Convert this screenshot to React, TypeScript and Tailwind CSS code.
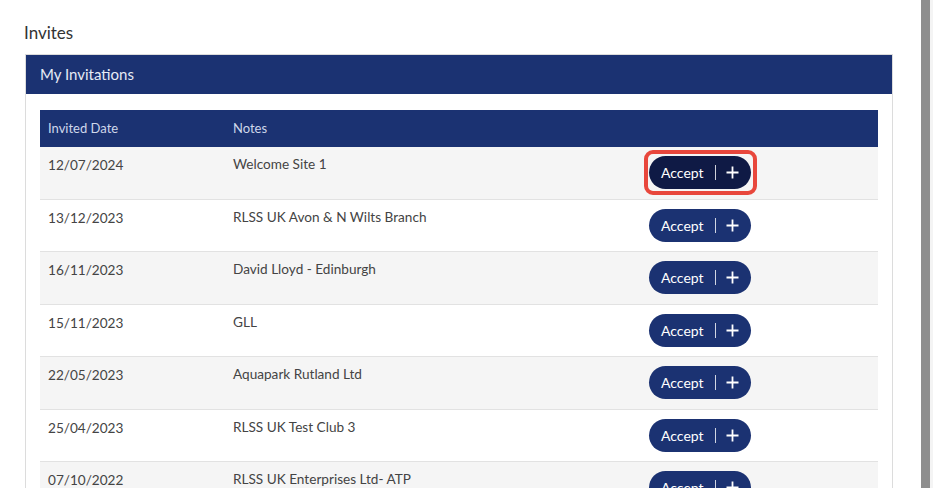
import React from "react";

const invitations = [
  { date: "12/07/2024", notes: "Welcome Site 1", focused: true },
  { date: "13/12/2023", notes: "RLSS UK Avon & N Wilts Branch" },
  { date: "16/11/2023", notes: "David Lloyd - Edinburgh" },
  { date: "15/11/2023", notes: "GLL" },
  { date: "22/05/2023", notes: "Aquapark Rutland Ltd" },
  { date: "25/04/2023", notes: "RLSS UK Test Club 3" },
  { date: "07/10/2022", notes: "RLSS UK Enterprises Ltd- ATP" },
];

function PlusIcon() {
  return (
    <svg width="13" height="13" viewBox="0 0 13 13" fill="none" stroke="white" strokeWidth="1.8">
      <path d="M6.5 0.5v12M0.5 6.5h12" />
    </svg>
  );
}

function AcceptButton({ focused }: { focused?: boolean }) {
  return (
    <div className="relative inline-flex">
      {focused && (
        <div className="absolute -left-[5px] -right-[6px] -top-[6px] -bottom-[6px] rounded-[9px] border-4 border-[#e8473c]" />
      )}
      <button
        className={`relative flex h-[33px] w-[102px] items-center rounded-full pl-[12px] text-[14px] text-white ${
          focused ? "bg-[#0f1a45]" : "bg-[#1b3272]"
        }`}
      >
        <span>Accept</span>
        <span className="ml-[11px] h-[15px] w-px bg-white/80" />
        <span className="ml-[10px]">
          <PlusIcon />
        </span>
      </button>
    </div>
  );
}

export default function App() {
  return (
    <div className="flex h-[488px] w-[933px] overflow-hidden bg-white font-['Lato',sans-serif]">
      <div className="flex-1 pl-[24px] pr-[28px] pt-[23px]">
        <h2 className="text-[17px] leading-5 text-[#333]">Invites</h2>
        <div className="mt-[11px] ml-px border border-[#dcdcdc] bg-white">
          <div className="flex h-[39px] items-center bg-[#1b3272] px-[14px] text-[15px] text-[#e6ebf5]">
            My Invitations
          </div>
          <div className="px-[14px] pt-[16px]">
            <div className="grid h-[37px] grid-cols-[193px_408px_1fr] items-center bg-[#1b3272] text-[13px] text-[#cfd7ea]">
              <div className="pl-[8px]">Invited Date</div>
              <div>Notes</div>
              <div />
            </div>
            {invitations.map((inv, i) => (
              <div
                key={inv.date}
                className={`grid h-[52.5px] grid-cols-[193px_408px_1fr] border-b border-[#e2e2e2] text-[13.6px] text-[#444] ${
                  i % 2 === 0 ? "bg-[#f5f5f5]" : "bg-white"
                }`}
              >
                <div className="pl-[8px] pt-[8px] leading-5">{inv.date}</div>
                <div className="pt-[7px] leading-5">{inv.notes}</div>
                <div className="flex items-center pl-[8px]">
                  <AcceptButton focused={inv.focused} />
                </div>
              </div>
            ))}
          </div>
        </div>
      </div>
      <div className="h-full w-[9px] bg-[#8e8e8e]" />
      <div className="h-full w-[3px] bg-[#f4f4f4]" />
    </div>
  );
}
